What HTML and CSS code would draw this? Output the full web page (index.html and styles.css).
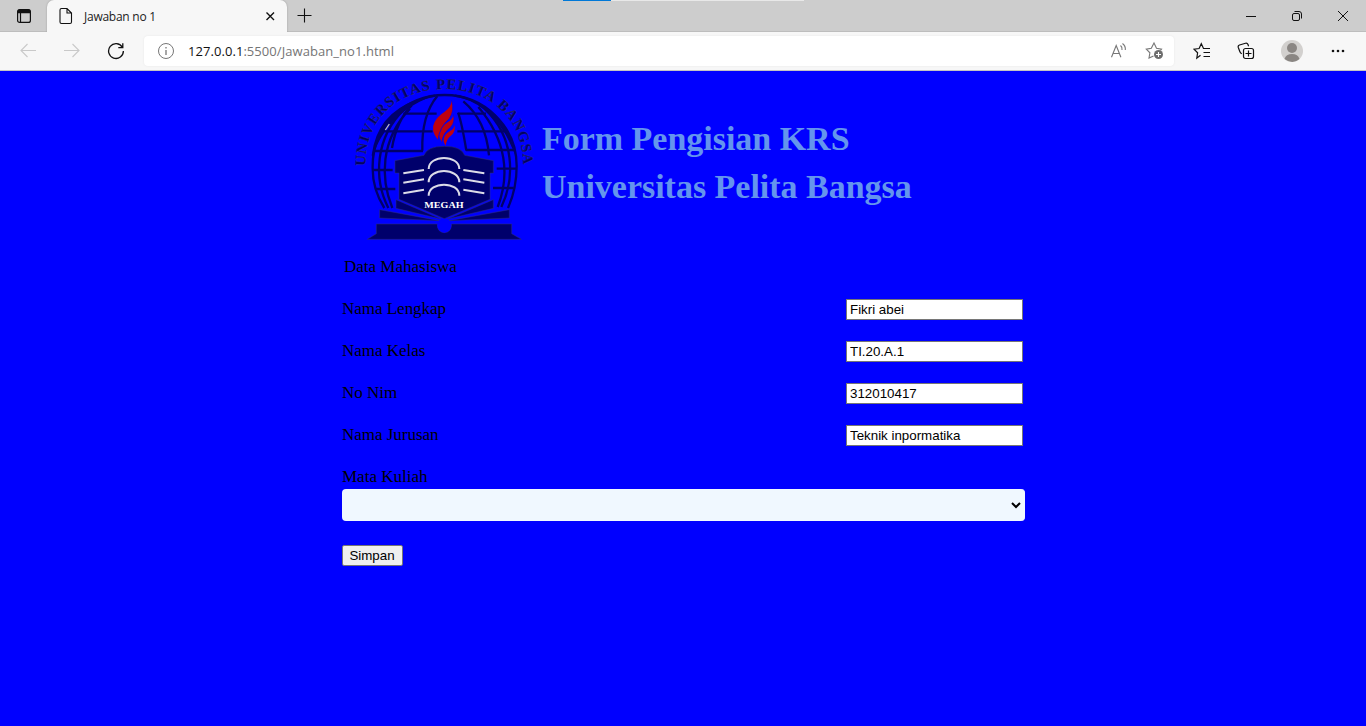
FILE: index.html
```html
<!DOCTYPE html>
<html lang="id">
<head>
<meta charset="utf-8">
<title>Jawaban no 1</title>
<link rel="stylesheet" href="styles.css">
</head>
<body>
<header class="browser">
  <div class="tabs">
    <svg class="tab-menu" width="16" height="16" viewBox="0 0 16 16" fill="none" stroke="#111" stroke-width="1.2"><rect x="1.6" y="1.6" width="12.8" height="12.8" rx="2"/><path d="M2 3.5h12" stroke-width="3.5"/><path d="M4.5 5v9"/></svg>
    <div class="tab">
      <svg class="page-icon" width="14" height="18" viewBox="0 0 14 18" fill="none" stroke="#111" stroke-width="1.1"><path d="M2.500 1.500h5.500l4.500 4.500v9q0 1.500-1.500 1.500h-8.500q-1.500 0-1.500-1.500v-12q0-1.500 1.500-1.500zM8 1.500v4.500h4.500"/></svg>
      <span class="tab-title">Jawaban no 1</span>
      <svg class="tab-close" width="10" height="10" viewBox="0 0 10 10" stroke="#111" stroke-width="1.4"><path d="M1.500 1.500l7.500 7.500M9 1.500l-7.500 7.500"/></svg>
    </div>
    <svg class="new-tab" width="16" height="16" viewBox="0 0 16 16" stroke="#111" stroke-width="1.1"><path d="M.5 7.500h14M7.500 .5v14"/></svg>
    <div class="progress"><div class="progress-done"></div></div>
    <div class="window-buttons">
      <svg width="12" height="12" viewBox="0 0 12 12" stroke="#111"><path d="M1 6.500h10"/></svg>
      <svg width="12" height="12" viewBox="0 0 12 12" fill="none" stroke="#111"><rect x="1.500" y="3.500" width="7" height="7" rx="1.500"/><path d="M3.500 1.500h4.500q2.500 0 2.500 2.500v4.500"/></svg>
      <svg width="12" height="12" viewBox="0 0 12 12" stroke="#111"><path d="M1 1l10 10M11 1l-10 10"/></svg>
    </div>
  </div>
  <div class="toolbar">
    <svg class="nav-icon" width="18" height="16" viewBox="0 0 18 16" fill="none" stroke="#c9c9c9" stroke-width="1.100"><path d="M17 7.500h-15M8.500 1l-6.500 6.500 6.500 6.500"/></svg>
    <svg class="nav-icon" width="18" height="16" viewBox="0 0 18 16" fill="none" stroke="#c9c9c9" stroke-width="1.100"><path d="M1 7.500h15M9.500 1l6.500 6.500-6.500 6.500"/></svg>
    <svg class="nav-icon" width="18" height="18" viewBox="0 0 18 18" fill="none" stroke="#111" stroke-width="1.300"><path d="M15.300 5.200a7.400 7.400 0 1 0 1.100 3.800M15.800 1.200v4.500h-4.500"/></svg>
    <div class="address">
      <svg width="18" height="18" viewBox="0 0 18 18" fill="none" stroke="#777"><circle cx="9" cy="9" r="7.500"/><path d="M9 8v5M9 5v1.500" stroke-width="1.300"/></svg>
      <span class="url"><span class="host">127.0.0.1</span>:5500/Jawaban_no1.html</span>
      <svg class="read-aloud" width="18" height="18" viewBox="0 0 18 18" fill="none" stroke="#777" stroke-width="1.100"><path d="M1.500 15.200L6.200 3.500l4.700 11.700M3.200 11.500h6M10.500 3.500q2 1.500 1.500 4.500M12.500 1.500q3.300 2.500 2.800 6.500"/></svg>
      <svg width="20" height="20" viewBox="0 0 20 20" fill="none" stroke="#777" stroke-width="1.100"><path d="M8.500 15l-4.500 2 .9-5.200L1.300 8.100l5-.8L9 2l2.500 5.300 5 .8-1 1.200"/><circle cx="13.500" cy="13.500" r="4.500" fill="#6d6d6d" stroke="none"/><path d="M13.500 11v5M11 13.500h5" stroke="#fff"/></svg>
    </div>
    <div class="actions">
      <svg width="18" height="18" viewBox="0 0 18 18" fill="none" stroke="#111" stroke-width="1.200"><path d="M7.500 13.300l-3.700 2.900.8-5.400L1 7.200l5.100-.7L8.300 1.700l2.200 4.800h6.500M10.500 10.500h6.500M10.500 14.500h6.500"/></svg>
      <svg width="18" height="18" viewBox="0 0 18 18" fill="none" stroke="#111" stroke-width="1.200"><rect x="6.500" y="6.500" width="10" height="10" rx="2"/><path d="M11.500 8.500v6M8.500 11.500h6M4.800 11.800q-1.500-.8-2-2.300L1.300 5.500q-.6-1.900 1.200-2.500L8.500 1.200q1.800-.5 2.500 1.300l.6 1.800"/></svg>
      <svg class="avatar" width="22" height="22" viewBox="0 0 22 22"><circle cx="11" cy="11" r="11" fill="#d2d0ce"/><circle cx="11" cy="8" r="5" fill="#8a8683"/><path d="M3.500 19q1.500-5 7.500-5t7.500 5q-7 6-15 0" fill="#8a8683"/></svg>
      <svg class="more" width="14" height="4" viewBox="0 0 14 4" fill="#111"><circle cx="2" cy="2" r="1.300"/><circle cx="7" cy="2" r="1.300"/><circle cx="12" cy="2" r="1.300"/></svg>
    </div>
  </div>
</header>
<main class="page">
  <div class="banner">
    <svg class="logo" width="210" height="180" viewBox="0 0 630 540">
      <defs><path id="ring" d="M76 282C76 130 185 51 313 51S550 130 550 282V320"/></defs>
      <text class="ring-text"><textPath href="#ring">UNIVERSITAS PELITA BANGSA</textPath></text>
      <g fill="none" stroke="#00006b" stroke-width="7">
        <path d="M133 408Q96 350 98 282A216 213 0 0 1 530 282Q530 350 504 408"/>
        <path d="M145 408C100 320 105 195 195 110Q235 78 285 71M157 408C121 320 120 205 210 110M156 228Q170 145 215 100M247 236Q244 130 292 72"/>
        <path d="M484 405C525 320 525 195 433 110Q395 78 345 71M473 405C510 310 500 205 415 105M447 250Q438 145 370 88M379 236Q365 150 354 122"/>
        <path d="M190 125H290M355 125H438M133 178H278M352 178H492M102 237H249M378 234H522M98 294H158M470 290H530M108 351H166M459 348H521"/>
      </g>
      <path d="M95 250Q110 125 230 83L285 69Q190 105 145 165T101 263zM345 69Q500 100 526 250L515 225Q490 165 440 118T345 69z" fill="#00006b"/>
      <path d="M136 174l12-18" stroke="#bbc" stroke-width="4"/>
      <g fill="#be0010">
        <path d="M335 84Q345 116 328 140Q298 166 294 204Q270 174 284 150Q292 134 313 120Q335 105 335 84z"/>
        <path d="M340 127Q347 150 332 166Q308 184 306 211Q290 187 303 168Q311 158 324 150Q339 142 340 127z"/>
        <path d="M344 160Q348 180 331 193Q320 202 317 221Q306 207 315 190Q320 182 330 177Q342 172 344 160z"/>
        <path d="M335 84Q345 116 328 140Q298 166 294 204M340 127Q347 150 332 166Q308 184 306 211" fill="none" stroke="#0000e8" stroke-width="2.500"/>
      </g>
      <g fill="#00006b" stroke="#303078" stroke-width="1.500">
        <path d="M165 266L252 250Q262 223 313 223T374 250L460 266V303H450V382L313 440L177 382V303H165z"/>
        <path d="M168 383L303 441L168 409zM460 383L323 441L460 409z"/>
        <path d="M119 413L298 446L119 438zM508 413L328 446L508 438z"/>
        <path d="M109 456H292Q292 482 313 482T335 456H515V485L544 502H82L109 485z"/>
      </g>
      <circle cx="313" cy="461" r="21" fill="#00f"/>
      <g fill="none" stroke="#dcdce8" stroke-width="6">
        <path d="M190 304L252 294M190 332L252 322M190 364L252 353M370 294L433 304M370 322L433 332M370 353L433 364"/>
        <path d="M266 291C266 247 358 247 358 291M266 331C266 286 358 286 358 331M266 371C266 327 358 327 358 371"/>
      </g>
      <text class="motto" x="253" y="409" textLength="118" lengthAdjust="spacingAndGlyphs">MEGAH</text>
    </svg>
    <h1 class="heading">Form Pengisian KRS<br>Universitas Pelita Bangsa</h1>
  </div>
  <form class="form">
    <div class="legend">Data Mahasiswa</div>
    <label class="row">Nama Lengkap<input type="text" value="Fikri abei"></label>
    <label class="row">Nama Kelas<input type="text" value="TI.20.A.1"></label>
    <label class="row">No Nim<input type="text" value="312010417"></label>
    <label class="row">Nama Jurusan<input type="text" value="Teknik inpormatika"></label>
    <label class="course">Mata Kuliah
      <select class="select"><option></option></select>
    </label>
    <button class="save" type="button">Simpan</button>
  </form>
</main>
</body>
</html>
```
FILE: styles.css
```css
* { box-sizing: border-box; }
body { margin: 0; height: 726px; overflow: hidden; background: #00f; }
svg { display: block; flex: none; }

.browser { height: 71px; background: #f7f7f7; border-bottom: 1px solid #c4c4c4; font-family: "Open Sans", sans-serif; }
.tabs { height: 32px; display: flex; background: #cdcdcd; border-bottom: 1px solid #bdbdbd; }
.tab-menu { margin: 8px 15px 0 16px; }
.tab { width: 240px; height: 32px; display: flex; align-items: center; padding: 0 12px; background: #f7f7f7; border-radius: 7px 7px 0 0; box-shadow: 0 0 2px #999; clip-path: inset(0 -3px 0 -3px); }
.tab-title { flex: 1; margin-left: 11px; font-size: 12px; letter-spacing: -0.25px; color: #222; white-space: nowrap; }
.new-tab { margin: 8px 0 0 10px; }
.progress { width: 241px; height: 1px; margin-left: 250px; background: #e8e8e8; }
.progress-done { width: 48px; height: 1px; background: #0078d7; }
.window-buttons { display: flex; gap: 34px; margin: 10px 17px 0 auto; }

.toolbar { height: 38px; display: flex; align-items: center; padding-left: 19px; }
.nav-icon { margin-right: 26px; }
.address { width: 1030px; height: 30px; display: flex; align-items: center; margin-left: -7px; padding: 0 9px 0 13px; background: #fff; border-radius: 4px; box-shadow: 0 0 2px #e5e5e5; }
.url { margin-left: 13px; font-size: 13px; letter-spacing: 0.06px; color: #757575; white-space: nowrap; }
.host { color: #111; }
.read-aloud { margin: 0 17px 0 auto; }
.actions { flex: 1; display: flex; align-items: center; margin-left: 19px; gap: 26px; }
.more { margin-left: 2px; }

.page { width: 683px; margin-left: 342px; font: 17px "Liberation Serif", serif; color: #000; }
.banner { height: 182px; display: flex; }
.logo { margin: 1px 0 0 -2px; overflow: visible; }
.ring-text { font: bold 44px "Liberation Serif", serif; letter-spacing: 3.3px; fill: #000064; stroke: #38386c; stroke-width: .8px; }
.motto { font: bold 25px "Liberation Serif", serif; fill: #fff; }
.heading { margin: 44px 0 0 -8px; font-size: 34px; line-height: 48px; letter-spacing: -0.02px; color: #6495ed; white-space: nowrap; }

.legend { height: 35px; padding: 4px 2px; line-height: 20px; }
.row { height: 42px; display: flex; align-items: center; justify-content: space-between; letter-spacing: -0.02px; }
.row input { width: 177px; height: 21px; margin-right: 2px; padding: 1px 2px 1px 3px; border: 1px solid #767676; background: #fff; font: 13.333px "Liberation Sans", sans-serif; }
.course { display: block; padding-top: 11px; line-height: 20px; }
.select { display: block; width: 683px; height: 32px; margin-top: 2px; padding-right: 1px; border: 0; border-right: 1px solid #f0f8ff; border-radius: 4px; background-color: #f0f8ff; }
.save { display: block; width: 61px; height: 21px; margin-top: 24px; padding: 0 1px 0 0; border: 1px solid #767676; border-radius: 2px; background: #efefef; font: 13.333px "Liberation Sans", sans-serif; color: #000; }
```
